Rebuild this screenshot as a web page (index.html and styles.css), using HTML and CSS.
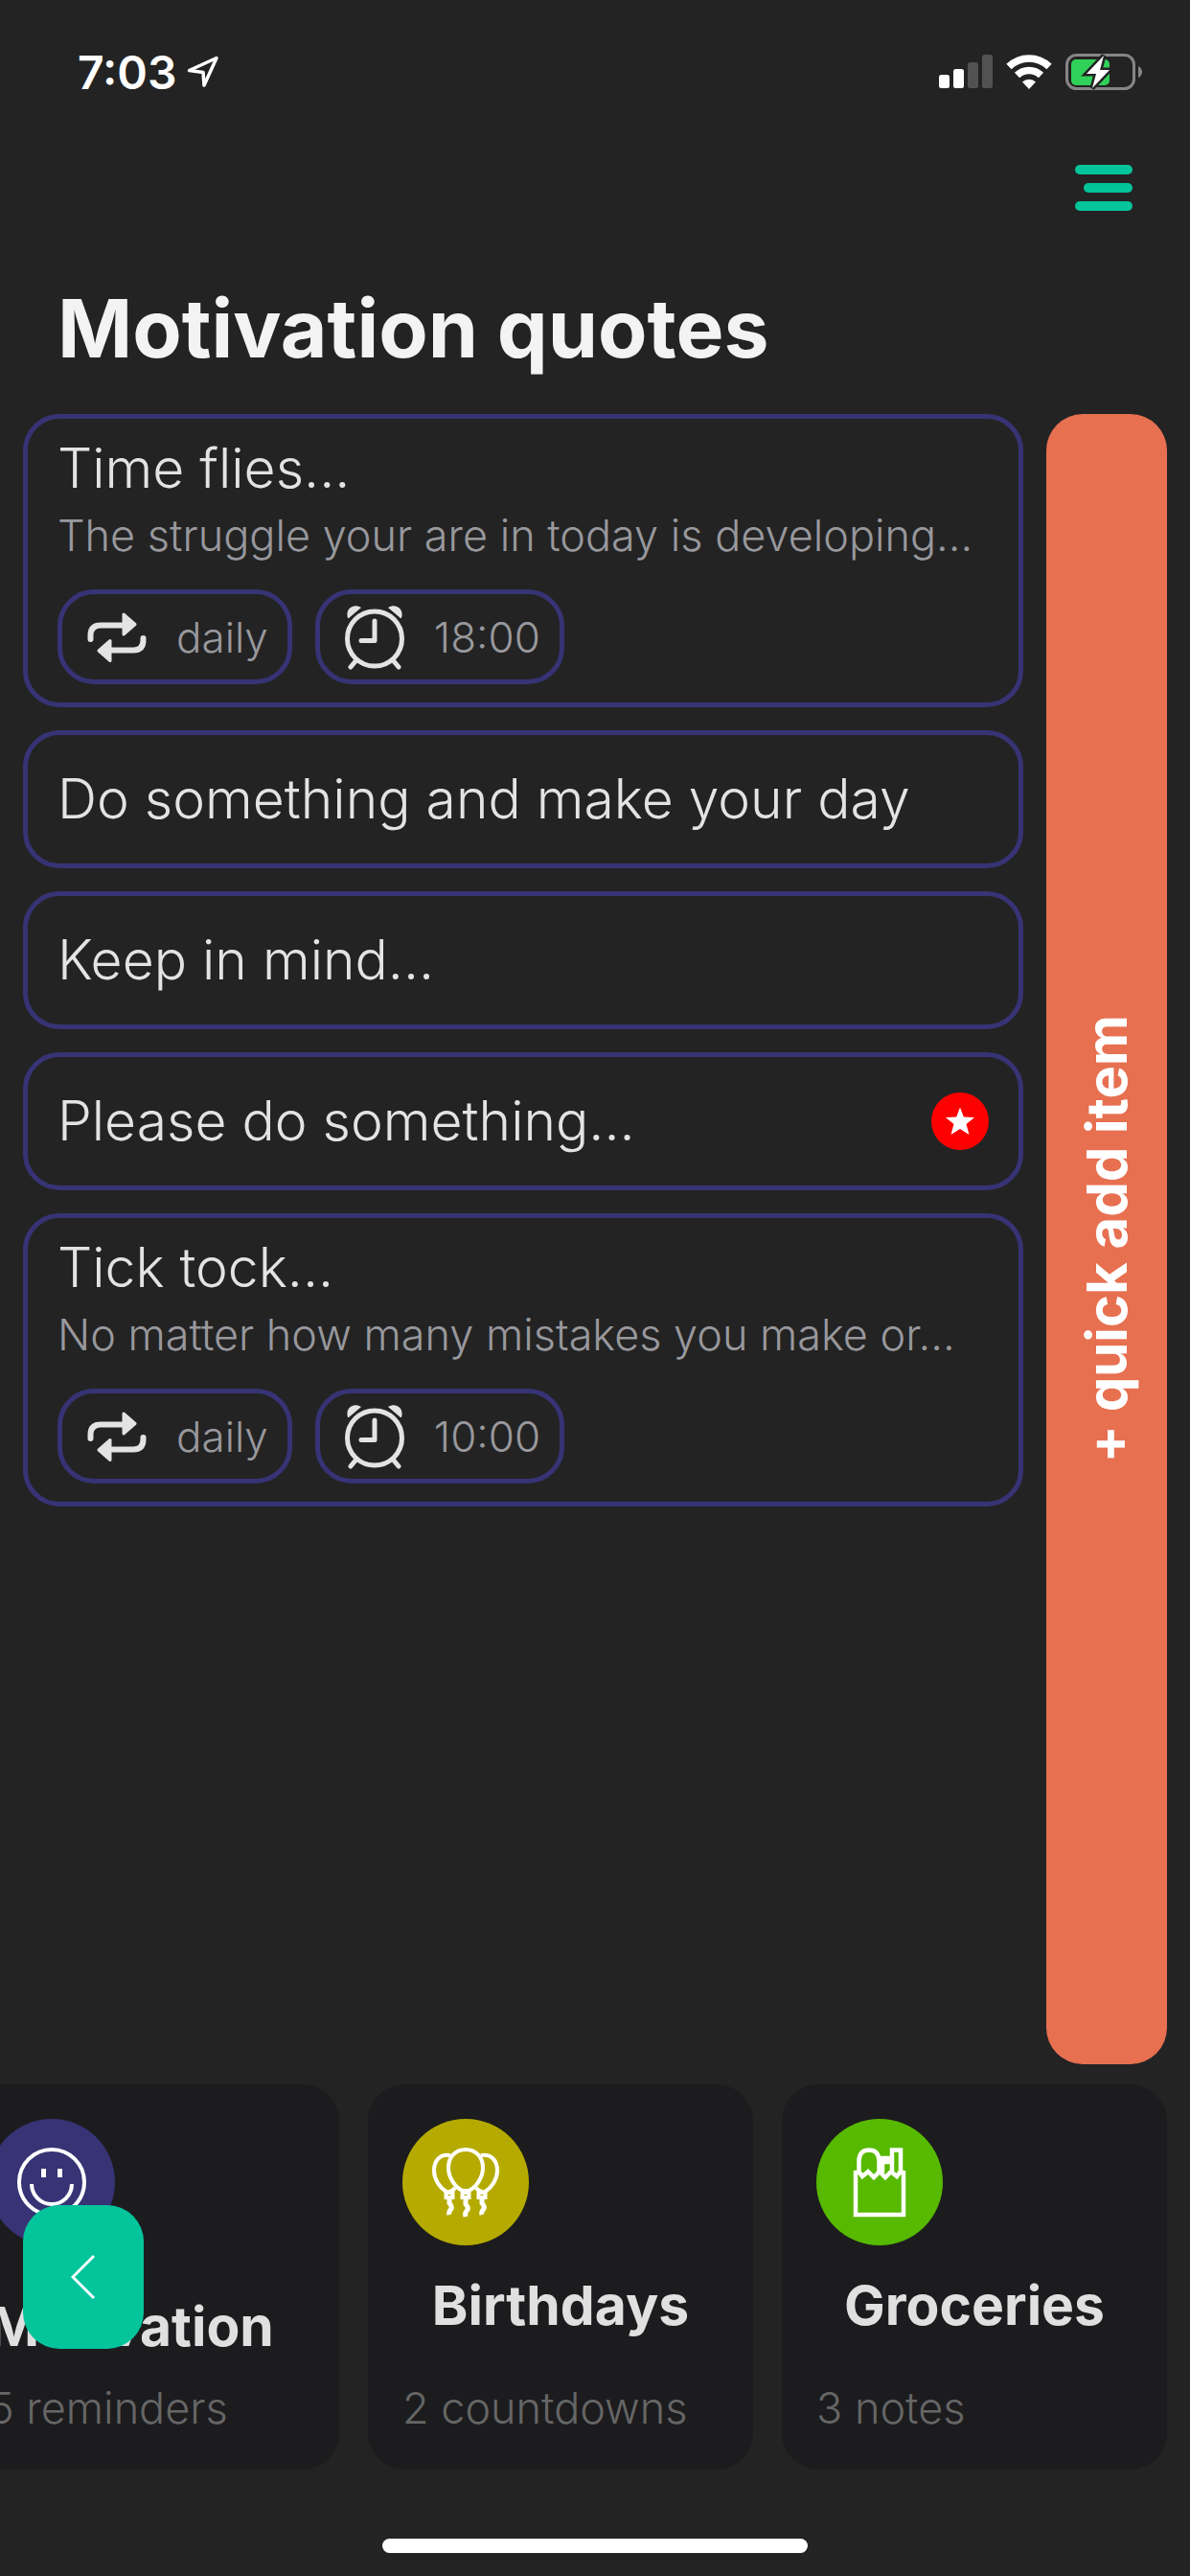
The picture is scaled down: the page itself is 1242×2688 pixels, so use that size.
FILE: index.html
```html
<!DOCTYPE html>
<html lang="en">
<head>
  <meta charset="utf-8">
  <meta name="viewport" content="width=device-width, initial-scale=1">
  <title>Motivation quotes</title>
  <link rel="stylesheet" href="styles.css">
</head>
<body>
  <svg class="sprite" aria-hidden="true">
    <symbol id="icon-repeat" viewBox="0 0 62 52">
      <path d="M3.500 28v-4Q3.500 13.500 14 13.500H38" fill="none" stroke="currentColor" stroke-width="6" stroke-linecap="round"/>
      <path d="M38 2v21L50 12.500Z" fill="currentColor" stroke="currentColor" stroke-width="3" stroke-linejoin="round"/>
      <path d="M58.500 27v2Q58.500 39.500 48 39.500H24" fill="none" stroke="currentColor" stroke-width="6" stroke-linecap="round"/>
      <path d="M24 29.500v21L12 40Z" fill="currentColor" stroke="currentColor" stroke-width="3" stroke-linejoin="round"/>
    </symbol>
    <symbol id="icon-alarm" viewBox="0 0 62 68">
      <g fill="none" stroke="currentColor" stroke-width="5" stroke-linecap="round">
        <ellipse cx="31" cy="35.500" rx="28.500" ry="28.500"/>
        <path d="M31 17v20.500H17M11 59l-5 6M51 59l5 6" stroke-linejoin="round"/>
      </g>
      <path d="M3 14C0 4 9-2 17 3L4 14ZM59 14C62 4 53-2 45 3L58 14Z" fill="currentColor"/>
    </symbol>
  </svg>

  <header class="status">
    <div class="status__left">
      <span class="status__time">7:03</span>
      <svg class="status__location" viewBox="0 0 34 34" aria-hidden="true"><path d="M31 2.500 2.500 15.500 17 17.500 18 31Z" fill="none" stroke="#fff" stroke-width="3.500" stroke-linejoin="round"/></svg>
    </div>
    <div class="status__right">
      <svg class="status__signal" viewBox="0 0 56 36" aria-hidden="true">
        <g fill="#fff"><rect y="21" width="11" height="14" rx="2.500"/><rect x="15" y="15" width="11" height="20" rx="2.500"/></g>
        <g fill="#525252"><rect x="30" y="8" width="11" height="27" rx="2.500"/><rect x="45" y="0" width="11" height="35" rx="2.500"/></g>
      </svg>
      <svg class="status__wifi" viewBox="0 0 48 36" aria-hidden="true">
        <path d="M3 12.500a30 30 0 0 1 42 0M11.500 21.500a18 18 0 0 1 25 0" fill="none" stroke="#fff" stroke-width="7.500"/>
        <path d="M24 36 17 28.500a10 10 0 0 1 14 0Z" fill="#fff"/>
      </svg>
      <svg class="status__battery" viewBox="0 0 80 38" aria-hidden="true">
        <rect x="1.500" y="1.500" width="70" height="35" rx="10" fill="none" stroke="#868686" stroke-width="3"/>
        <path d="M76 13q4 2 4 6t-4 6Z" fill="#868686"/>
        <rect x="6" y="6" width="40" height="27" rx="5" fill="#30d158"/>
        <path d="M40 2 22 21H32L28 36 46 17H36Z" fill="#fff" stroke="#232323" stroke-width="5" paint-order="stroke"/>
      </svg>
    </div>
  </header>

  <nav class="toolbar">
    <button class="menu" type="button" aria-label="Menu">
      <span class="menu__line"></span>
      <span class="menu__line menu__line--short"></span>
      <span class="menu__line"></span>
    </button>
  </nav>

  <h1 class="heading">Motivation quotes</h1>

  <main class="board">
    <ul class="notes">
      <li class="note">
        <h2 class="note__title">Time flies...</h2>
        <p class="note__text">The struggle your are in today is developing...</p>
        <div class="chips">
          <span class="chip"><svg class="chip__repeat" aria-hidden="true"><use href="#icon-repeat"/></svg>daily</span>
          <span class="chip"><svg class="chip__alarm" aria-hidden="true"><use href="#icon-alarm"/></svg>18:00</span>
        </div>
      </li>
      <li class="note note--simple">
        <h2 class="note__title">Do something and make your day</h2>
      </li>
      <li class="note note--simple">
        <h2 class="note__title">Keep in mind...</h2>
      </li>
      <li class="note note--simple">
        <h2 class="note__title">Please do something...</h2>
        <svg class="note__star" viewBox="0 0 60 60" role="img" aria-label="Starred"><circle cx="30" cy="30" r="30" fill="#f00"/><path d="M30 15.500 33.800 25.500 45 26 36.500 33 39.500 44 30 38 20.500 44 23.500 33 15 26 26.200 25.500Z" fill="#fff"/></svg>
      </li>
      <li class="note">
        <h2 class="note__title">Tick tock...</h2>
        <p class="note__text">No matter how many mistakes you make or...</p>
        <div class="chips">
          <span class="chip"><svg class="chip__repeat" aria-hidden="true"><use href="#icon-repeat"/></svg>daily</span>
          <span class="chip"><svg class="chip__alarm" aria-hidden="true"><use href="#icon-alarm"/></svg>10:00</span>
        </div>
      </li>
    </ul>
    <button class="quick-add" type="button"><span class="quick-add__label">+ quick add item</span></button>
  </main>

  <section class="lists">
    <div class="tiles">
      <a class="tile" href="#motivation">
        <svg class="tile__icon tile__icon--indigo" viewBox="0 0 132 132" aria-hidden="true">
          <g fill="none" stroke="#fff" stroke-width="4"><circle cx="66" cy="66" r="34"/><path d="M45 68a21 21 0 0 0 42 0"/></g>
          <path d="M55 52h5v9h-5ZM72 52h5v9h-5Z" fill="#fff"/>
        </svg>
        <span class="tile__name tile__name--long">Motivation</span>
        <span class="tile__count">5 reminders</span>
      </a>
      <a class="tile" href="#birthdays">
        <svg class="tile__icon tile__icon--olive" viewBox="0 0 132 132" aria-hidden="true">
          <g fill="none" stroke="#fff" stroke-width="4">
            <path d="M66 32c11 0 18 8 18 19 0 10-7 20-13 23q-5 2-10 0C55 71 48 61 48 51c0-11 7-19 18-19Z"/>
            <path d="M50 38C39 36 33 44 33 54c0 9 6 18 13 22q5 1 9-4M82 38c11-2 17 6 17 16 0 9-6 18-13 22q-5 1-9-4"/>
            <path d="M45.500 77h7v5h-7ZM62.500 77h7v5h-7ZM79.500 77h7v5h-7Z"/>
            <path d="M49 84v4q4 4 1 7-2 2-1 5M66 84v5q4 4 1 7-2 2-1 6M83 84v4q4 4 1 7-2 2-1 5" stroke-width="5"/>
          </g>
        </svg>
        <span class="tile__name">Birthdays</span>
        <span class="tile__count">2 countdowns</span>
      </a>
      <a class="tile" href="#groceries">
        <svg class="tile__icon tile__icon--lime" viewBox="0 0 132 132" aria-hidden="true">
          <g fill="none" stroke="#fff" stroke-width="4.500">
            <path d="M41 54v46H91V54"/>
            <path d="M40 56h5l3 4 6-5 6 6 6-6 6 6 6-6 6 5 3-4h5"/>
            <path d="M44.500 56V43C45 36 49 32.500 55 32.500S65 36 65.500 43V56M69 56V41h9M69 45h9M79 56V32.500h9V56"/>
          </g>
        </svg>
        <span class="tile__name">Groceries</span>
        <span class="tile__count">3 notes</span>
      </a>
    </div>
    <button class="back" type="button" aria-label="Back">
      <svg class="back__icon" viewBox="0 0 26 48" aria-hidden="true"><path d="M24 2 2 24 24 46" fill="none" stroke="#fff" stroke-width="3"/></svg>
    </button>
  </section>

  <footer class="home"><span class="home__bar"></span></footer>
</body>
</html>
```
FILE: styles.css
```css
* {
  box-sizing: border-box;
}

body {
  margin: 0;
  min-height: 100vh;
  display: flex;
  flex-direction: column;
  background: #232323;
  color: #e3e3e3;
  font-family: Inter, "Liberation Sans", sans-serif;
  font-optical-sizing: none;
}

button {
  margin: 0;
  padding: 0;
  border: 0;
  font: inherit;
  cursor: pointer;
}

.sprite {
  display: none;
}

/* Status bar */
.status {
  height: 150px;
  padding: 0 50px 0 81px;
  display: flex;
  align-items: center;
  justify-content: space-between;
}

.status__left,
.status__right {
  display: flex;
  align-items: center;
}

.status__left {
  gap: 10px;
}

.status__right {
  gap: 14px;
}

.status__time {
  font-size: 48px;
  font-weight: 600;
  color: #fff;
}

.status__location {
  width: 34px;
  height: 34px;
}

.status__signal {
  width: 56px;
  height: 36px;
}

.status__wifi {
  width: 48px;
  height: 36px;
}

.status__battery {
  width: 80px;
  height: 38px;
}

/* Toolbar */
.toolbar {
  height: 92px;
  padding: 0 60px;
  display: flex;
  align-items: center;
  justify-content: flex-end;
}

.menu {
  width: 60px;
  display: flex;
  flex-direction: column;
  align-items: flex-end;
  gap: 9px;
  background: none;
}

.menu__line {
  width: 60px;
  height: 10px;
  border-radius: 5px;
  background: #04c49c;
}

.menu__line--short {
  width: 51px;
}

.heading {
  margin: 53px 60px 41px;
  font-size: 84px;
  line-height: 96px;
  font-weight: 700;
  color: #f3f3f3;
}

/* Notes and the add rail */
.board {
  flex: 1;
  padding: 0 24px;
  display: flex;
  gap: 24px;
}

.notes {
  flex: 1;
  min-width: 0;
  margin: 0;
  padding: 0;
  list-style: none;
  display: flex;
  flex-direction: column;
  gap: 24px;
}

.note {
  padding: 19px 31px;
  border: 5px solid #373375;
  border-radius: 38px;
}

.note--simple {
  min-height: 144px;
  display: flex;
  align-items: center;
  justify-content: space-between;
}

.note__title {
  margin: 0;
  font-size: 57px;
  line-height: 66px;
  font-weight: 300;
}

.note__text {
  margin: 8px 0 27px;
  font-size: 45px;
  line-height: 58px;
  font-weight: 300;
  color: #98989d;
  white-space: nowrap;
  overflow: hidden;
  text-overflow: ellipsis;
}

.note__star {
  width: 60px;
  height: 60px;
}

.chips {
  display: flex;
  gap: 24px;
}

.chip {
  height: 99px;
  padding: 0 20px 0 26px;
  display: flex;
  align-items: center;
  gap: 31px;
  border: 5px solid #373375;
  border-radius: 38px;
  font-size: 44px;
  font-weight: 300;
  color: #98989d;
}

.chip__repeat {
  width: 62px;
  height: 52px;
  color: #e3e3e3;
}

.chip__alarm {
  width: 62px;
  height: 68px;
  color: #e3e3e3;
}

.quick-add {
  width: 126px;
  flex: none;
  display: flex;
  align-items: center;
  justify-content: center;
  border-radius: 38px;
  background: #e77051;
  color: #fff;
}

.quick-add__label {
  writing-mode: vertical-rl;
  transform: rotate(180deg);
  font-size: 58px;
  line-height: 66px;
  font-weight: 700;
}

/* Other lists */
.lists {
  position: relative;
  margin-top: 21px;
}

.tiles {
  padding-right: 24px;
  display: flex;
  justify-content: flex-end;
  gap: 30px;
  overflow: hidden;
}

.tile {
  width: 402px;
  flex: none;
  padding: 36px;
  display: flex;
  flex-direction: column;
  border-radius: 38px;
  background: #1c1c1e;
  color: #e0e0e0;
  text-decoration: none;
}

.tile__icon {
  width: 132px;
  height: 132px;
  border-radius: 50%;
}

.tile__icon--indigo {
  background: #373375;
}

.tile__icon--olive {
  background: #b5ab00;
}

.tile__icon--lime {
  background: #57b900;
}

.tile__name {
  height: 88px;
  margin: 30px 0 26px;
  display: flex;
  justify-content: center;
  align-items: flex-start;
  font-size: 57px;
  line-height: 66px;
  font-weight: 700;
}

.tile__name--long {
  justify-content: flex-start;
  align-items: flex-end;
}

.tile__count {
  margin-bottom: 2px;
  font-size: 45px;
  line-height: 52px;
  font-weight: 300;
  color: #666;
}

.back {
  position: absolute;
  left: 24px;
  bottom: 126px;
  width: 126px;
  height: 150px;
  display: flex;
  align-items: center;
  justify-content: center;
  border-radius: 38px;
  background: #04c49c;
}

.back__icon {
  width: 26px;
  height: 48px;
}

.home {
  padding: 72px 0 24px;
  display: flex;
  justify-content: center;
}

.home__bar {
  width: 444px;
  height: 15px;
  border-radius: 8px;
  background: #fff;
}
```
